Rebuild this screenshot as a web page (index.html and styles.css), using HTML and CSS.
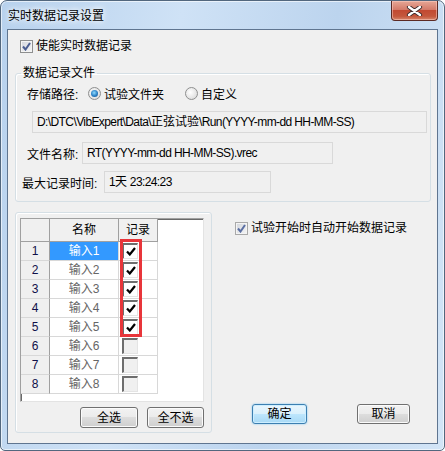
FILE: index.html
```html
<!DOCTYPE html>
<html lang="zh-CN">
<head>
    <meta charset="UTF-8">
    <title>实时数据记录设置</title>
    <link rel="stylesheet" href="styles.css">
</head>
<body>
    <div class="window">
        <div class="titlebar">
            <span class="title">实时数据记录设置</span>
            <span class="close">
                <svg width="17" height="10" viewBox="0 0 17 10">
                    <path d="M3 1 L14 9 M14 1 L3 9" stroke="#3b2a2a" stroke-width="4.2" stroke-linecap="round"/>
                    <path d="M3 1 L14 9 M14 1 L3 9" stroke="#ffffff" stroke-width="2.4" stroke-linecap="round"/>
                </svg>
            </span>
        </div>
        <div class="client">
            <div class="enable">
                <span class="chk"><svg width="9" height="9" viewBox="0 0 9 9"><path d="M1 4.5 L3.5 7.5 L8 1" fill="none" stroke="#4a5d91" stroke-width="2"/></svg></span>
                <span class="chk-text">使能实时数据记录</span>
            </div>

            <fieldset class="group-file">
                <legend>数据记录文件</legend>
                <div class="row row-store">
                    <span class="lbl-store">存储路径:</span>
                    <span class="radio-opt">
                        <span class="radio on"></span>
                        <span>试验文件夹</span>
                    </span>
                    <span class="radio-opt">
                        <span class="radio"></span>
                        <span>自定义</span>
                    </span>
                </div>
                <div class="box box-path">D:\DTC\VibExpert\Data\<span class="cjk">正弦试验</span>\Run(YYYY-mm-dd HH-MM-SS)</div>
                <div class="row row-name">
                    <span class="lbl-name">文件名称:</span>
                    <div class="box box-name">RT(YYYY-mm-dd HH-MM-SS).vrec</div>
                </div>
                <div class="row row-max">
                    <span class="lbl-max">最大记录时间:</span>
                    <div class="box box-max">1<span class="cjk">天</span> 23:24:23</div>
                </div>
            </fieldset>

            <div class="lower">
                <div class="group-chan">
                    <div class="grid">
                        <div class="cell hd"></div>
                        <div class="cell hd">名称</div>
                        <div class="cell hd">记录</div>

                        <div class="cell num">1</div>
                        <div class="cell name sel">输入1</div>
                        <div class="cell rec"><span class="cb on"><svg width="10" height="9" viewBox="0 0 10 9"><path d="M1 4.5 L3.8 7.5 L9 1" fill="none" stroke="#000" stroke-width="2.2"/></svg></span></div>

                        <div class="cell num">2</div>
                        <div class="cell name">输入2</div>
                        <div class="cell rec"><span class="cb on"><svg width="10" height="9" viewBox="0 0 10 9"><path d="M1 4.5 L3.8 7.5 L9 1" fill="none" stroke="#000" stroke-width="2.2"/></svg></span></div>

                        <div class="cell num">3</div>
                        <div class="cell name">输入3</div>
                        <div class="cell rec"><span class="cb on"><svg width="10" height="9" viewBox="0 0 10 9"><path d="M1 4.5 L3.8 7.5 L9 1" fill="none" stroke="#000" stroke-width="2.2"/></svg></span></div>

                        <div class="cell num">4</div>
                        <div class="cell name">输入4</div>
                        <div class="cell rec"><span class="cb on"><svg width="10" height="9" viewBox="0 0 10 9"><path d="M1 4.5 L3.8 7.5 L9 1" fill="none" stroke="#000" stroke-width="2.2"/></svg></span></div>

                        <div class="cell num">5</div>
                        <div class="cell name">输入5</div>
                        <div class="cell rec"><span class="cb on"><svg width="10" height="9" viewBox="0 0 10 9"><path d="M1 4.5 L3.8 7.5 L9 1" fill="none" stroke="#000" stroke-width="2.2"/></svg></span></div>

                        <div class="cell num">6</div>
                        <div class="cell name">输入6</div>
                        <div class="cell rec"><span class="cb"></span></div>

                        <div class="cell num">7</div>
                        <div class="cell name">输入7</div>
                        <div class="cell rec"><span class="cb"></span></div>

                        <div class="cell num">8</div>
                        <div class="cell name">输入8</div>
                        <div class="cell rec"><span class="cb"></span></div>

                        <div class="mark"></div>
                    </div>
                    <div class="grid-buttons">
                        <button class="btn btn-all">全选</button>
                        <button class="btn btn-none">全不选</button>
                    </div>
                </div>

                <div class="side">
                    <div class="auto">
                        <span class="chk light"><svg width="9" height="9" viewBox="0 0 9 9"><path d="M1 4.5 L3.5 7.5 L8 1" fill="none" stroke="#5b6fa3" stroke-width="2"/></svg></span>
                        <span class="chk-text">试验开始时自动开始数据记录</span>
                    </div>
                    <div class="dlg-buttons">
                        <button class="btn btn-default btn-ok">确定</button>
                        <button class="btn btn-cancel">取消</button>
                    </div>
                </div>
            </div>
        </div>
    </div>
</body>
</html>
```

FILE: styles.css
```css
body {
    margin: 0;
    background: #ffffff;
    font-family: "Liberation Sans", "Noto Sans CJK SC", sans-serif;
    font-size: 12px;
    color: #000000;
}

.window {
    box-sizing: border-box;
    width: 445px;
    height: 451px;
    display: flex;
    flex-direction: column;
    border: 1px solid #52677e;
    border-radius: 7px 7px 5px 5px;
    background: linear-gradient(100deg, #b7d1ed 0%, #cfe2f6 35%, #bcd4ee 65%, #d3e5f7 100%);
    box-shadow: inset 0 0 0 1px rgba(255, 255, 255, 0.6);
}

.titlebar {
    height: 28px;
    display: flex;
    align-items: flex-start;
}

.title {
    margin: 8px 0 0 7px;
    line-height: 14px;
    text-shadow: 0 0 5px #ffffff, 0 0 8px #ffffff;
}

.close {
    box-sizing: border-box;
    margin-left: auto;
    margin-right: 6px;
    width: 47px;
    height: 20px;
    display: flex;
    align-items: center;
    justify-content: center;
    border: 1px solid #5b2a24;
    border-top: none;
    border-radius: 0 0 4px 4px;
    background: linear-gradient(#e6a796 0%, #d47b6a 45%, #c24a32 50%, #c4573c 80%, #d6866c 100%);
    box-shadow: inset 0 0 0 1px rgba(255, 210, 200, 0.5);
}

.client {
    flex: 1;
    margin: 0 6px 6px;
    border: 1px solid #5f7590;
    background: #f0f0f0;
    display: flex;
    flex-direction: column;
}

/* checkbox / radio */
.enable, .auto {
    display: flex;
    align-items: center;
    height: 13px;
    line-height: 13px;
}

.enable {
    margin: 10px 0 0 12px;
}

.chk {
    box-sizing: border-box;
    width: 13px;
    height: 13px;
    display: flex;
    align-items: center;
    justify-content: center;
    border: 1px solid #8e8f8f;
    background: linear-gradient(135deg, #d2d5dc, #f6f6f6);
    box-shadow: inset 0 0 0 1px #f4f4f4;
}

.chk.light {
    border-color: #a9a9a9;
}

.chk-text {
    margin-left: 3px;
}

.radio {
    box-sizing: border-box;
    width: 13px;
    height: 13px;
    border-radius: 50%;
    border: 1px solid #8e8f8f;
    background: radial-gradient(circle at 40% 40%, #ffffff, #d4d4d4);
    display: flex;
    align-items: center;
    justify-content: center;
}

.radio.on::after {
    content: "";
    width: 7px;
    height: 7px;
    border-radius: 50%;
    background: radial-gradient(circle at 45% 40%, #8fdcff 0%, #2a7fc4 55%, #144d86 100%);
}

/* group: data file */
.group-file {
    margin: 13px 6px 0 7px;
    padding: 0 0 8px 0;
    border: 1px solid #d5dfe5;
    border-radius: 3px;
    box-shadow: inset 1px 1px 0 #ffffff;
    min-width: 0;
}

.group-file legend {
    margin-left: 5px;
    padding: 0 2px;
    line-height: 14px;
}

.row {
    display: flex;
    align-items: center;
}

.row-store {
    margin-top: 3px;
    height: 20px;
    padding-left: 11px;
}

.lbl-store {
    width: 61px;
}

.radio-opt {
    display: flex;
    align-items: center;
    gap: 3px;
    width: 97px;
}

.box {
    box-sizing: border-box;
    height: 22px;
    line-height: 20px;
    padding-left: 4px;
    border: 1px solid #d9d9d9;
    background: #f0f0f0;
    white-space: nowrap;
    letter-spacing: -0.6px;
}

.box .cjk {
    letter-spacing: 0;
}

.box-path {
    margin: 8px 0 0 16px;
    width: 395px;
}

.row-name {
    margin-top: 9px;
    padding-left: 11px;
}

.lbl-name {
    width: 55px;
}

.box-name {
    width: 251px;
}

.row-max {
    margin-top: 7px;
    padding-left: 6px;
}

.lbl-max {
    width: 82px;
}

.box-max {
    width: 167px;
}

/* lower part */
.lower {
    flex: 1;
    display: flex;
    margin-top: 10px;
    margin-bottom: 10px;
}

.group-chan {
    box-sizing: border-box;
    margin-left: 7px;
    width: 197px;
    padding: 5px 0 0 4px;
    border: 1px solid #d5dfe5;
    border-radius: 3px;
    box-shadow: inset 1px 1px 0 #ffffff;
}

.grid {
    position: relative;
    box-sizing: border-box;
    width: 184px;
    height: 184px;
    display: grid;
    grid-template-columns: 29px 69px 39px;
    grid-template-rows: 23px repeat(8, 19px);
    align-content: start;
    background: #ffffff;
    border-top: 1px solid #a0a0a0;
    border-left: 1px solid #a0a0a0;
    border-right: 1px solid #e3e3e3;
    border-bottom: 1px solid #e3e3e3;
    box-shadow: inset 1px 1px 0 #696969;
}

.cell {
    box-sizing: border-box;
    display: flex;
    align-items: center;
    justify-content: center;
    border-right: 1px solid #d8d8d8;
    border-bottom: 1px solid #d8d8d8;
    line-height: 14px;
}

.hd {
    background: #f0f0f0;
    border-right-color: #a0a0a0;
    border-bottom-color: #a0a0a0;
}

.num {
    background: #f0f0f0;
    border-right-color: #a0a0a0;
    color: #10104a;
}

.name {
    color: #666666;
}

.name.sel {
    background: #3399ff;
    color: #ffffff;
}

.rec {
    justify-content: flex-start;
    padding-left: 3px;
}

.cb {
    box-sizing: border-box;
    width: 16px;
    height: 16px;
    display: flex;
    align-items: center;
    justify-content: center;
    border-top: 2px solid #6e6e6e;
    border-left: 2px solid #6e6e6e;
    border-right: 1px solid #e4e4e4;
    border-bottom: 1px solid #e4e4e4;
    background: #f0f0f0;
}

.cb.on {
    background: #ffffff;
}

.mark {
    position: absolute;
    left: 99px;
    top: 20px;
    width: 22px;
    height: 98px;
    box-sizing: border-box;
    border: 3px solid #e8353a;
}

.grid-buttons {
    width: 184px;
    margin-top: 5px;
    display: flex;
    justify-content: flex-end;
    gap: 9px;
}

.btn {
    box-sizing: border-box;
    height: 21px;
    padding: 0;
    font-family: "Liberation Sans", "Noto Sans CJK SC", sans-serif;
    font-size: 12px;
    line-height: 18px;
    color: #000000;
    border: 1px solid #707070;
    border-radius: 3px;
    background: linear-gradient(#f2f2f2 0%, #ebebeb 50%, #dddddd 50%, #cfcfcf 100%);
    box-shadow: inset 0 0 0 1px #fbfbfb;
}

.btn-all {
    width: 58px;
}

.btn-none {
    width: 57px;
}

.side {
    flex: 1;
    display: flex;
    flex-direction: column;
}

.auto {
    margin: 10px 0 0 23px;
}

.dlg-buttons {
    margin-top: auto;
    margin-bottom: 9px;
    padding-left: 40px;
    display: flex;
    gap: 50px;
}

.btn-ok {
    width: 55px;
    height: 20px;
}

.btn-cancel {
    width: 53px;
    height: 20px;
}

.btn-default {
    border-color: #3c7fb1;
    background: linear-gradient(#eaf6fd 0%, #d9f0fc 50%, #bee6fd 50%, #a7d9f5 100%);
    box-shadow: inset 0 0 0 1px #cdeeff, 0 0 2px #6fc3f2;
}
```
